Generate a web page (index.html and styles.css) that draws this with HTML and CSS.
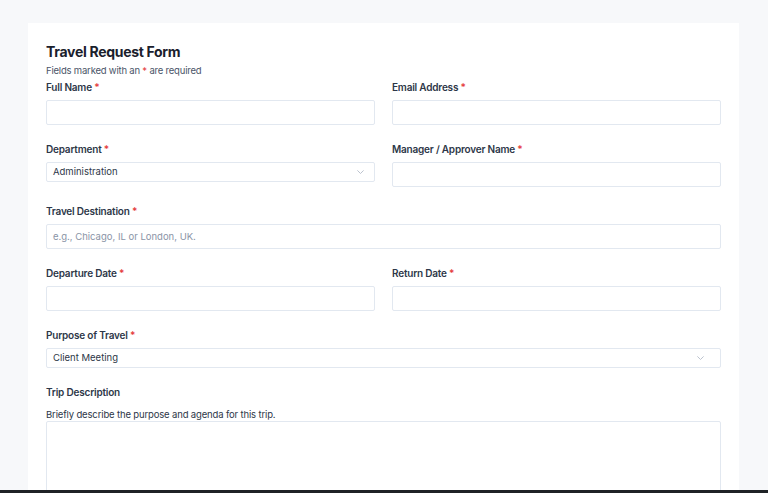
FILE: index.html
```html
<!DOCTYPE html>
<html lang="en">
<head>
<meta charset="utf-8">
<title>Travel Request Form</title>
<link rel="stylesheet" href="styles.css">
</head>
<body>
<main class="page">
  <form class="card">
    <h1 class="title">Travel Request Form</h1>
    <p class="subtitle">Fields marked with an <span class="req">*</span> are required</p>
    <div class="grid">
      <div class="field">
        <label class="label">Full Name <span class="req">*</span></label>
        <div class="input"></div>
      </div>
      <div class="field">
        <label class="label">Email Address <span class="req">*</span></label>
        <div class="input"></div>
      </div>
      <div class="field">
        <label class="label">Department <span class="req">*</span></label>
        <div class="select"><span>Administration</span>
          <svg class="chev" viewBox="0 0 7 4" width="7" height="4"><path d="M0.4 0.4 L3.5 3.5 L6.6 0.4" fill="none" stroke="#b4bcc8" stroke-width="0.9"/></svg>
        </div>
      </div>
      <div class="field">
        <label class="label">Manager / Approver Name <span class="req">*</span></label>
        <div class="input"></div>
      </div>
      <div class="field wide">
        <label class="label">Travel Destination <span class="req">*</span></label>
        <div class="input"><span class="ph">e.g., Chicago, IL or London, UK.</span></div>
      </div>
      <div class="field">
        <label class="label">Departure Date <span class="req">*</span></label>
        <div class="input"></div>
      </div>
      <div class="field">
        <label class="label">Return Date <span class="req">*</span></label>
        <div class="input"></div>
      </div>
      <div class="field wide">
        <label class="label">Purpose of Travel <span class="req">*</span></label>
        <div class="select select-wide"><span>Client Meeting</span>
          <svg class="chev" viewBox="0 0 7 4" width="7" height="4"><path d="M0.4 0.4 L3.5 3.5 L6.6 0.4" fill="none" stroke="#b4bcc8" stroke-width="0.9"/></svg>
        </div>
      </div>
      <div class="field wide">
        <label class="label">Trip Description</label>
        <p class="help">Briefly describe the purpose and agenda for this trip.</p>
        <div class="textarea"></div>
      </div>
    </div>
  </form>
</main>
<div class="dock"></div>
</body>
</html>
```

FILE: styles.css
```css
* { box-sizing: border-box; }
html, body {
  margin: 0;
  height: 493px;
  overflow: hidden;
  background: #f7f8fa;
  font-family: Inter, "Noto Sans", "Liberation Sans", sans-serif;
}
.page {
  padding: 23px 29px 0 28px;
}
.card {
  background: #ffffff;
  width: 711px;
  padding: 18px 18px 0 18px;
  display: block;
}
.title {
  margin: 0;
  font-size: 14px;
  line-height: 22px;
  font-weight: 700;
  color: #1a202c;
  letter-spacing: -0.3px;
}
.subtitle {
  margin: 0 0 2px 0;
  font-size: 9.5px;
  line-height: 15px;
  color: #4a5568;
  letter-spacing: -0.2px;
}
.req { color: #e53e3e; }
.grid {
  display: grid;
  grid-template-columns: 1fr 1fr;
  column-gap: 17px;
  align-items: start;
}
.field {
  display: flex;
  flex-direction: column;
  margin-bottom: 17px;
}
.wide { grid-column: 1 / -1; }
.label {
  font-size: 10px;
  line-height: 15px;
  font-weight: 600;
  color: #2d3748;
  letter-spacing: -0.2px;
  margin-bottom: 4.5px;
}
.input, .select, .textarea {
  border: 1px solid #e2e8f0;
  border-radius: 2px;
  background: #fff;
  font-size: 9.5px;
  color: #2d3748;
}
.input {
  height: 25.5px;
  display: flex;
  align-items: center;
  padding-left: 6px;
}
.ph { color: #8a94a6; }
.select {
  height: 20.5px;
  display: flex;
  align-items: center;
  justify-content: space-between;
  padding: 0 10px 0 6px;
}
.select-wide { padding-right: 16.5px; }
.chev { display: block; }
.help {
  margin: 4px 0 0 0;
  font-size: 9.5px;
  line-height: 12px;
  letter-spacing: -0.15px;
  color: #2d3748;
}
.textarea {
  height: 120px;
}
.dock {
  position: fixed;
  left: 0;
  right: 0;
  bottom: 0;
  height: 3px;
  background: #1f2226;
}
```
